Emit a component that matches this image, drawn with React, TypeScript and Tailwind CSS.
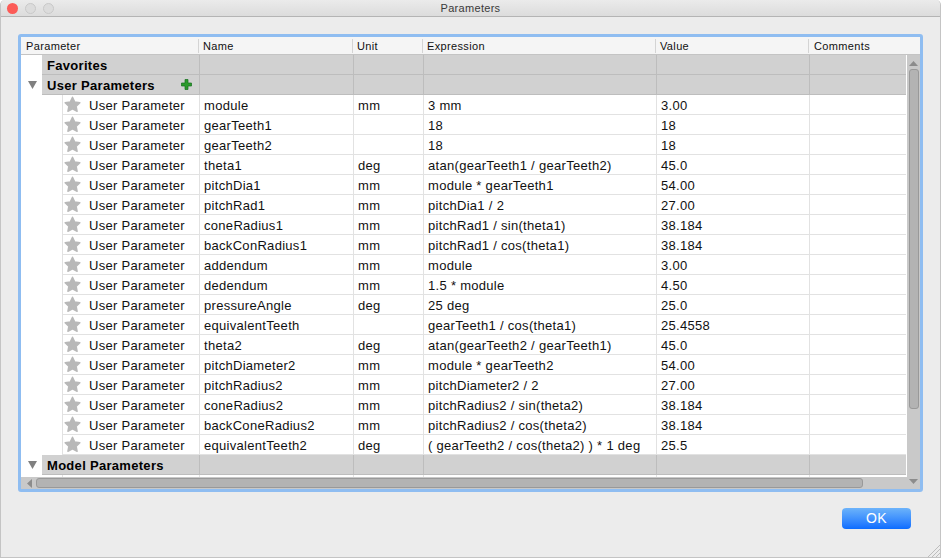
const rows = [
  ["module", "mm", "3 mm", "3.00"],
  ["gearTeeth1", "", "18", "18"],
  ["gearTeeth2", "", "18", "18"],
  ["theta1", "deg", "atan(gearTeeth1 / gearTeeth2)", "45.0"],
  ["pitchDia1", "mm", "module * gearTeeth1", "54.00"],
  ["pitchRad1", "mm", "pitchDia1 / 2", "27.00"],
  ["coneRadius1", "mm", "pitchRad1 / sin(theta1)", "38.184"],
  ["backConRadius1", "mm", "pitchRad1 / cos(theta1)", "38.184"],
  ["addendum", "mm", "module", "3.00"],
  ["dedendum", "mm", "1.5 * module", "4.50"],
  ["pressureAngle", "deg", "25 deg", "25.0"],
  ["equivalentTeeth", "", "gearTeeth1 / cos(theta1)", "25.4558"],
  ["theta2", "deg", "atan(gearTeeth2 / gearTeeth1)", "45.0"],
  ["pitchDiameter2", "mm", "module * gearTeeth2", "54.00"],
  ["pitchRadius2", "mm", "pitchDiameter2 / 2", "27.00"],
  ["coneRadius2", "mm", "pitchRadius2 / sin(theta2)", "38.184"],
  ["backConeRadius2", "mm", "pitchRadius2 / cos(theta2)", "38.184"],
  ["equivalentTeeth2", "deg", "( gearTeeth2 / cos(theta2) ) * 1 deg", "25.5"],
];

function Star() {
  return (
    <svg width="17" height="17" viewBox="0 0 18 18" className="mb-[1px] ml-[1px] shrink-0">
      <path
        d="M9 1.300l2.400 5 5.400.8-3.900 3.800 1 5.300L9 13.700l-4.900 2.500 1-5.300-3.900-3.800 5.400-.8z"
        fill="#b8b8b8"
        stroke="#b8b8b8"
        strokeWidth="1.500"
        strokeLinejoin="round"
      />
    </svg>
  );
}

function Triangle() {
  return (
    <svg width="9" height="8" viewBox="0 0 9 8">
      <path d="M0 0h9L4.500 8z" fill="#808080" />
    </svg>
  );
}

function GroupRow({ label, open, plus }: { label: string; open?: boolean; plus?: boolean }) {
  return (
    <div className="flex h-5 shrink-0">
      <div className="flex w-[21px] shrink-0 items-center bg-white pl-[7px]">
        {open && <Triangle />}
      </div>
      <div className="flex w-[157px] shrink-0 items-center justify-between border-b border-[#bdbdbd] bg-[#d1d1d1] pl-[5px] pr-[7px] pt-[3px] font-bold tracking-[0.3px] text-black">
        <span>{label}</span>
        {plus && (
          <svg width="11" height="11" viewBox="0 0 11 11" className="mb-[4px]">
            <path d="M4 .5h3V4h3.500v3H7v3.500H4V7H.5V4H4z" fill="#2c9a2c" stroke="#15701c" strokeWidth="0.7" />
          </svg>
        )}
      </div>
      <div className="w-[154px] shrink-0 border-b border-l border-[#bdbdbd] bg-[#d1d1d1]" />
      <div className="w-[70px] shrink-0 border-b border-l border-[#bdbdbd] bg-[#d1d1d1]" />
      <div className="w-[233px] shrink-0 border-b border-l border-[#bdbdbd] bg-[#d1d1d1]" />
      <div className="w-[153px] shrink-0 border-b border-l border-[#bdbdbd] bg-[#d1d1d1]" />
      <div className="w-[97px] shrink-0 border-b border-l border-[#bdbdbd] bg-[#d1d1d1]" />
    </div>
  );
}

function Row({ cells }: { cells?: string[] }) {
  return (
    <div className="flex h-5 shrink-0 tracking-[0.3px]">
      <div className="w-[41px] shrink-0" />
      <div className="flex w-[137px] shrink-0 items-center border-b border-l border-[#e2e2e2]">
        {cells && <Star />}
        {cells && <span className="ml-[8px] mt-[2px]">User Parameter</span>}
      </div>
      <div className="flex w-[154px] shrink-0 items-center border-b border-l border-[#e2e2e2] pl-[4px] pt-[3px]">{cells?.[0]}</div>
      <div className="flex w-[70px] shrink-0 items-center border-b border-l border-[#e2e2e2] pl-[4px] pt-[3px]">{cells?.[1]}</div>
      <div className="flex w-[233px] shrink-0 items-center border-b border-l border-[#e2e2e2] pl-[4px] pt-[3px]">{cells?.[2]}</div>
      <div className="flex w-[153px] shrink-0 items-center border-b border-l border-[#e2e2e2] pl-[4px] pt-[3px]">{cells?.[3]}</div>
      <div className="w-[97px] shrink-0 border-b border-l border-[#e2e2e2]" />
    </div>
  );
}

function HeaderCell({ label, className }: { label: string; className: string }) {
  return (
    <div className={`flex h-[14px] shrink-0 items-center border-l border-[#d4d4d4] ${className}`}>
      {label}
    </div>
  );
}

export default function App() {
  return (
    <div className="flex h-[558px] w-[941px] flex-col overflow-hidden rounded-t-[5px] border-x border-b border-[#c4c4c4] bg-[#ececec] font-['Liberation_Sans',sans-serif] text-[13px] text-[#111]">
      {/* title bar */}
      <div className="relative flex h-[17px] shrink-0 items-center justify-center border-b border-[#b4b4b4] bg-gradient-to-b from-[#ebebeb] to-[#dcdcdc] text-[11px] tracking-[0.3px] text-[#3a3a3a]">
        <div className="absolute left-[6px] top-[3px] flex gap-[7px]">
          <span className="size-[11px] rounded-full bg-[#fc5b57]" />
          <span className="size-[11px] rounded-full border border-[#c8c8c8] bg-[#dcdcdc]" />
          <span className="size-[11px] rounded-full border border-[#c8c8c8] bg-[#dcdcdc]" />
        </div>
        Parameters
      </div>

      {/* table */}
      <div className="mx-[17px] mt-[17px] flex h-[458px] flex-col overflow-hidden rounded-[3px] border-[3px] border-[#8fbdf1] bg-white">
        <div className="flex h-[18px] shrink-0 items-center border-b border-[#c4c4c4] bg-[#f5f5f5] pt-[1px] text-[11px] tracking-[0.35px]">
          <div className="w-[177px] shrink-0 pl-[5px]">Parameter</div>
          <HeaderCell label="Name" className="w-[154px] pl-[4px]" />
          <HeaderCell label="Unit" className="w-[70px] pl-[4px]" />
          <HeaderCell label="Expression" className="w-[233px] pl-[4px]" />
          <HeaderCell label="Value" className="w-[153px] pl-[4px]" />
          <HeaderCell label="Comments" className="w-[97px] pl-[5px]" />
        </div>

        <div className="flex min-h-0 flex-1">
          <div className="flex w-[886px] shrink-0 flex-col">
            <div className="flex min-h-0 flex-1 flex-col overflow-hidden">
              <GroupRow label="Favorites" />
              <GroupRow label="User Parameters" open plus />
              {rows.map((r) => (
                <Row key={r[0]} cells={r} />
              ))}
              <GroupRow label="Model Parameters" open />
              <Row />
            </div>

            {/* horizontal scrollbar */}
            <div className="flex h-[12px] shrink-0 items-center bg-[#c9c9c9] pl-[6px]">
              <svg width="5" height="9" viewBox="0 0 5 9" className="shrink-0">
                <path d="M5 0v9L0 4.500z" fill="#8c8c8c" />
              </svg>
              <div className="ml-[4px] h-[10px] w-[827px] rounded-[3px] border border-[#999] bg-[#b3b3b3]" />
            </div>
          </div>

          {/* vertical scrollbar */}
          <div className="flex w-[13px] shrink-0 flex-col items-center bg-[#c9c9c9] pt-[6px]">
            <svg width="9" height="5" viewBox="0 0 9 5" className="shrink-0">
              <path d="M4.500 0L9 5H0z" fill="#8c8c8c" />
            </svg>
            <div className="mt-[3px] h-[340px] w-[10px] rounded-[3px] border border-[#999] bg-[#b3b3b3]" />
            <svg width="9" height="5" viewBox="0 0 9 5" className="mb-[5px] mt-auto shrink-0">
              <path d="M0 0h9L4.500 5z" fill="#8c8c8c" />
            </svg>
          </div>
        </div>
      </div>

      {/* footer */}
      <div className="relative flex flex-1 items-start justify-end pr-[29px] pt-[16px]">
        <button className="flex h-[21px] w-[69px] items-center justify-center rounded-[4px] bg-gradient-to-b from-[#6cb3fa] to-[#0a6cff] text-[14px] tracking-[0.3px] text-white">
          OK
        </button>
        <svg width="14" height="14" viewBox="0 0 14 14" className="absolute bottom-0 right-0">
          <path d="M2 14L14 2M6 14l8-8M10 14l4-4" stroke="#bdbdbd" />
        </svg>
      </div>
    </div>
  );
}
